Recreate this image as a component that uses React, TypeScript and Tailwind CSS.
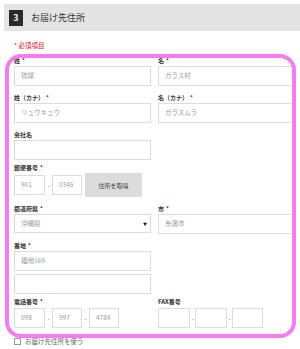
import React from "react";

const F = { fontFamily: '"Noto Sans CJK JP", "Noto Sans", sans-serif' };

function Label({ text, req }: { text: string; req?: boolean }) {
  return (
    <div className="h-[10px] leading-[10px] text-[6px] font-bold text-[#333] whitespace-nowrap">
      {text}
      {req && <span className="text-[#e60012] ml-[2px]">*</span>}
    </div>
  );
}

function Box({ text, className = "" }: { text?: string; className?: string }) {
  return (
    <div
      className={`h-[20px] border border-[#dcdcdc] bg-white flex items-center pl-[6px] text-[6.5px] text-[#999] whitespace-nowrap ${className}`}
    >
      {text}
    </div>
  );
}

function Dash({ w }: { w: string }) {
  return <div className={`${w} text-center text-[6px] text-[#555]`}>-</div>;
}

export default function App() {
  return (
    <div className="relative w-[300px] h-[349px] overflow-hidden bg-white" style={F}>
      <div className="mt-[4px] ml-[4px] h-[27px] bg-[#e4e4e4] flex items-center">
        <div className="ml-[5px] w-[14px] h-[16px] bg-[#2a2a2a] text-white text-[9px] font-bold flex items-center justify-center">
          3
        </div>
        <div className="ml-[8px] text-[9px] text-[#333]">お届け先住所</div>
      </div>
      <div className="mt-[9px] ml-[14px] h-[10px] leading-[10px] text-[6.5px] text-[#e60012]">
        * 必須項目
      </div>
      <div className="mt-[6px] pl-[14px] pr-[4px]">
        <div className="grid grid-cols-[137px_138px] gap-x-[7px]">
          <div>
            <Label text="姓" req />
            <Box text="琉球" />
          </div>
          <div>
            <Label text="名" req />
            <Box text="ガラス村" />
          </div>
          <div className="mt-[7px]">
            <Label text="姓（カナ）" req />
            <Box text="リュウキュウ" />
          </div>
          <div className="mt-[7px]">
            <Label text="名（カナ）" req />
            <Box text="ガラスムラ" />
          </div>
          <div className="mt-[7px]">
            <Label text="会社名" />
            <Box />
          </div>
          <div />
          <div className="mt-[3px]">
            <Label text="郵便番号" req />
            <div className="flex items-center h-[24px]">
              <Box text="901" className="w-[31px] h-[19px]" />
              <Dash w="w-[7px]" />
              <Box text="0345" className="w-[30px] h-[19px]" />
              <div className="ml-[3px] w-[57px] h-[24px] bg-[#dcdcdc] text-[6px] text-[#444] flex items-center justify-center">
                住所を取得
              </div>
            </div>
          </div>
          <div />
          <div className="mt-[7px]">
            <Label text="都道府県" req />
            <div className="h-[19px] border border-[#dcdcdc] bg-white flex items-center justify-between pl-[6px] pr-[3px] text-[6.5px] text-[#999]">
              <span>沖縄県</span>
              <span className="text-[4px] text-[#111]">▼</span>
            </div>
          </div>
          <div className="mt-[7px]">
            <Label text="市" req />
            <Box text="糸満市" className="h-[19px]" />
          </div>
          <div className="mt-[7px]">
            <Label text="番地" req />
            <Box text="福地169" className="h-[19px]" />
            <Box className="mt-[3px]" />
          </div>
          <div />
          <div className="mt-[3px]">
            <Label text="電話番号" req />
            <div className="flex items-center mt-[1px]">
              <Box text="098" className="w-[31px] h-[19px]" />
              <Dash w="w-[7px]" />
              <Box text="997" className="w-[30px] h-[19px]" />
              <Dash w="w-[7px]" />
              <Box text="4784" className="w-[30px] h-[19px]" />
            </div>
          </div>
          <div className="mt-[3px]">
            <Label text="FAX番号" />
            <div className="flex items-center mt-[1px]">
              <Box className="w-[32px] h-[19px]" />
              <Dash w="w-[5px]" />
              <Box className="w-[32px] h-[19px]" />
              <Dash w="w-[5px]" />
              <Box className="w-[31px] h-[19px]" />
            </div>
          </div>
        </div>
        <div className="mt-[9px] flex items-center">
          <div className="w-[7px] h-[7px] border border-[#999] bg-white" />
          <div className="ml-[4px] text-[6.5px] text-[#666] leading-[9px]">お届け先住所を使う</div>
        </div>
      </div>
      <div className="absolute left-[5px] top-[54px] w-[291px] h-[284px] border-[4px] border-[#f47cf0] rounded-[16px] pointer-events-none" />
    </div>
  );
}
